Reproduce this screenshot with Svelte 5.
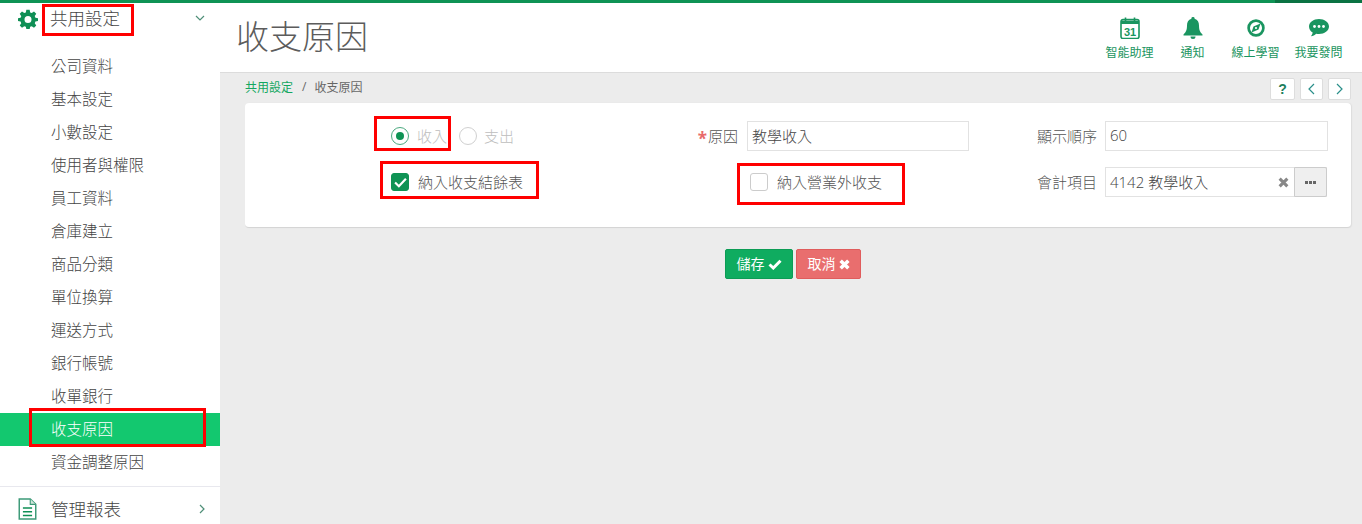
<script lang="ts">
  const menu = ["公司資料", "基本設定", "小數設定", "使用者與權限", "員工資料", "倉庫建立", "商品分類", "單位換算", "運送方式", "銀行帳號", "收單銀行", "收支原因", "資金調整原因"];
  const active = "收支原因";
</script>

<div class="page">
  <aside class="sidebar">
    <div class="group-head open">
      <svg class="group-icon" viewBox="0 0 24 24" width="20" height="20"><path fill="#0f8f55" d="M10 1h4l.6 3.100 1.900.8L19.200 3.100l2.700 2.700-1.800 2.700.8 1.900L24 11v3.500l-3.100.6-.8 1.900 1.800 2.700-2.700 2.700-2.700-1.800-1.900.8-.6 2.600h-4l-.6-2.600-1.900-.8-2.700 1.800-2.700-2.700 1.800-2.700-.8-1.900L0 14.500V11l3.100-.5.8-1.900L2.100 5.800 4.800 3.100l2.700 1.800 1.900-.8zM12 8.500a4.200 4.200 0 1 0 0 8.400 4.200 4.200 0 0 0 0-8.400z"/></svg>
      <span class="group-title">共用設定</span>
      <svg class="chev" viewBox="0 0 10 6" width="10" height="6"><path d="M1 1l4 4 4-4" fill="none" stroke="#4f8f78" stroke-width="1.200"/></svg>
    </div>
    <ul class="menu">
      {#each menu as item}
        <li class:active={item === active}>{item}</li>
      {/each}
    </ul>
    <div class="group-head last">
      <svg class="group-icon" viewBox="0 0 20 24" width="19" height="22"><path d="M1 1h12l6 6v16H1z" fill="#fff" stroke="#3d9a78" stroke-width="1.600"/><path d="M13 1v6h6" fill="#cfe5da" stroke="#3d9a78" stroke-width="1.200"/><path d="M5 11h10M5 15h10M5 19h10" stroke="#0f8f55" stroke-width="1.600"/></svg>
      <span class="group-title">管理報表</span>
      <svg class="chev" viewBox="0 0 6 10" width="6" height="10"><path d="M1 1l4 4-4 4" fill="none" stroke="#4f8f78" stroke-width="1.200"/></svg>
    </div>
  </aside>

  <main class="main">
    <header class="header">
      <h1>收支原因</h1>
      <nav class="tools">
        <div class="tool">
          <svg viewBox="0 0 20 22" width="20" height="22"><path d="M1 4.500a2 2 0 0 1 2-2h14a2 2 0 0 1 2 2v15a2 2 0 0 1-2 2H3a2 2 0 0 1-2-2z" fill="#fff" stroke="#1a9560" stroke-width="1.600"/><path d="M1 3.500h18v3.500H1z" fill="#1a9560"/><path d="M5.500 .5v4M14.500 .5v4" stroke="#1a9560" stroke-width="1.600"/><text x="10" y="18.500" text-anchor="middle" class="cal">31</text></svg>
          <span>智能助理</span>
        </div>
        <div class="tool">
          <svg viewBox="0 0 20 22" width="20" height="22"><path d="M10 0a1.600 1.600 0 0 1 1.600 1.800C14.800 2.600 16 5.300 16 8.500c0 4.500 1 6.500 3.500 9v1h-19v-1C3 15 4 13 4 8.500c0-3.200 1.200-5.900 4.400-6.700A1.600 1.600 0 0 1 10 0zM7.500 19.500h5a2.500 2.500 0 0 1-5 0z" fill="#1a9560"/></svg>
          <span>通知</span>
        </div>
        <div class="tool">
          <svg viewBox="0 0 20 20" width="18" height="18"><circle cx="10" cy="10" r="8.200" fill="none" stroke="#1a9560" stroke-width="3"/><path d="M15 5l-2.200 6.800L5 15l2.200-6.800zM10 8.800a1.200 1.200 0 1 0 0 2.400 1.200 1.200 0 0 0 0-2.400z" fill="#1a9560" fill-rule="evenodd"/></svg>
          <span>線上學習</span>
        </div>
        <div class="tool">
          <svg viewBox="0 0 20 18" width="20" height="18"><path d="M10 0c5.500 0 10 3.300 10 7.500S15.500 15 10 15c-1 0-2-.1-2.900-.3C5.800 16 4 17 1.800 17.300c1-1 1.700-2.200 1.900-3.700C1.400 12.200 0 10 0 7.500 0 3.300 4.500 0 10 0z" fill="#1a9560"/><circle cx="5.500" cy="7.500" r="1.400" fill="#fff"/><circle cx="10" cy="7.500" r="1.400" fill="#fff"/><circle cx="14.500" cy="7.500" r="1.400" fill="#fff"/></svg>
          <span>我要發問</span>
        </div>
      </nav>
    </header>

    <div class="content">
      <div class="crumbs">
        <span class="link">共用設定</span>
        <span class="sep">/</span>
        <span>收支原因</span>
        <div class="pager">
          <button class="help">?</button>
          <button aria-label="上一筆"><svg viewBox="0 0 7 12" width="7" height="12"><path d="M6 1L1 6l5 5" fill="none" stroke="#2a8f8a" stroke-width="1.200"/></svg></button>
          <button aria-label="下一筆"><svg viewBox="0 0 7 12" width="7" height="12"><path d="M1 1l5 5-5 5" fill="none" stroke="#2a8f8a" stroke-width="1.200"/></svg></button>
        </div>
      </div>

      <section class="card">
        <div class="radios">
          <span class="radio on"></span><span class="muted first">收入</span>
          <span class="radio"></span><span class="muted">支出</span>
        </div>
        <label class="field-label first-col" for="reason"><i>*</i>原因</label>
        <input id="reason" class="input" value="教學收入" />
        <label class="field-label" for="sort">顯示順序</label>
        <input id="sort" class="input" value="60" />

        <div class="check-cell">
          <span class="check on">
            <svg viewBox="0 0 12 10" width="13" height="11"><path d="M1 5l3.500 3.500L11 1.500" fill="none" stroke="#fff" stroke-width="2"/></svg>
          </span>
          <span class="check-text">納入收支結餘表</span>
        </div>
        <div class="check-cell second">
          <span class="check"></span>
          <span class="check-text">納入營業外收支</span>
        </div>
        <span class="field-label">會計項目</span>
        <div class="lookup">
          <span class="lookup-value">4142 教學收入</span>
          <svg class="clear" viewBox="0 0 10 10" width="11" height="11"><path d="M1.500 1.500l7 7M8.500 1.500l-7 7" stroke="#888" stroke-width="2.800"/></svg>
          <button class="more" aria-label="選擇"><span></span><span></span><span></span></button>
        </div>
      </section>

      <div class="actions">
        <button class="btn save">儲存
          <svg viewBox="0 0 14 11" width="14" height="11"><path d="M1.500 5.500l3.800 3.500L12.500 1.800" fill="none" stroke="#fff" stroke-width="3"/></svg>
        </button>
        <button class="btn cancel">取消
          <svg viewBox="0 0 10 10" width="11" height="11"><path d="M1.500 1.500l7 7M8.500 1.500l-7 7" stroke="#fff" stroke-width="3.200"/></svg>
        </button>
      </div>
    </div>
  </main>

  <!-- red annotation boxes from the screenshot -->
  <div class="mark" style="left:42px;top:4px;width:92px;height:32px"></div>
  <div class="mark" style="left:29px;top:408px;width:177px;height:39px"></div>
  <div class="mark" style="left:374px;top:116px;width:77px;height:35px"></div>
  <div class="mark" style="left:380px;top:161px;width:159px;height:38px"></div>
  <div class="mark" style="left:737px;top:163px;width:168px;height:42px"></div>
</div>

<style>
  :global(body) {
    margin: 0;
    overflow: hidden;
    font-family: "Open Sans", "Noto Sans CJK TC", sans-serif;
    font-weight: 300;
    color: #555;
  }

  .page {
    position: relative;
    display: flex;
    width: 1362px;
    height: 524px;
    overflow: hidden;
    border-style: solid;
    border-width: 3px 0 0;
    border-image: linear-gradient(90deg, #0f9355 1274px, #0a7343 1274px) 1;
    box-sizing: border-box;
    background: #ececec;
  }

  .sidebar {
    flex: 0 0 220px;
    background: #fff;
    display: flex;
    flex-direction: column;
  }

  .group-head {
    display: flex;
    align-items: center;
    height: 29px;
    padding: 0 15px 0 18px;
    flex: none;
  }

  .group-head.last {
    margin-top: 7px;
    height: 44px;
    border-top: 1px solid #e8e8ee;
    box-sizing: border-box;
  }

  .open .group-icon {
    margin-top: 2px;
    margin-right: 12px;
  }

  .group-icon {
    flex: none;
    margin-right: 14px;
  }

  .group-title {
    flex: 1;
    font-size: 17.500px;
    color: #444;
  }

  .chev {
    flex: none;
  }

  .menu {
    list-style: none;
    margin: 18px 0 0;
    padding: 0;
    flex: none;
  }

  .menu li {
    height: 33px;
    line-height: 33px;
    padding-left: 51px;
    font-size: 15.500px;
    color: #444;
  }

  .menu li.active {
    background: #13c86f;
    color: #fff;
  }

  .main {
    flex: 1;
    min-width: 0;
    display: flex;
    flex-direction: column;
  }

  .header {
    height: 70px;
    flex: none;
    background: #fff;
    border-bottom: 1px solid #dcdcdc;
    box-sizing: border-box;
    display: flex;
    justify-content: space-between;
    padding-left: 16px;
  }

  h1 {
    margin: 13px 0 0;
    font-size: 33px;
    line-height: 42px;
    font-weight: 300;
    color: #5c5c5c;
  }

  .tools {
    display: flex;
    padding: 14px 12px 0 0;
  }

  .tool {
    width: 63px;
    display: flex;
    flex-direction: column;
    align-items: center;
    font-size: 12px;
    font-weight: 400;
    color: #1a9560;
  }

  .tool svg {
    height: 22px;
    flex: none;
  }

  .tool span {
    margin-top: 6px;
    line-height: 16px;
  }

  .cal {
    font: 700 11px "Liberation Sans", sans-serif;
    fill: #1a9560;
  }

  .content {
    flex: 1;
    padding: 0 11px 0 25px;
  }

  .crumbs {
    display: flex;
    align-items: center;
    height: 30px;
    box-sizing: border-box;
    padding-bottom: 3px;
    font-size: 12px;
    font-weight: 400;
    color: #666;
  }

  .link {
    color: #13a760;
  }

  .sep {
    margin: 0 8px 0 9px;
  }

  .pager {
    margin-left: auto;
    display: flex;
    gap: 5px;
    margin-top: 4px;
  }

  .pager button {
    width: 23px;
    height: 22px;
    padding: 0;
    background: #fff;
    border: 1px solid #ddd;
    border-radius: 2px;
    display: flex;
    align-items: center;
    justify-content: center;
    font: 700 14px "Liberation Sans", sans-serif;
    color: #1d7f5c;
  }

  .pager .help {
    width: 25px;
  }

  .card {
    background: #fff;
    border-radius: 4px;
    border-bottom: 1px solid #d5d5d5;
    box-shadow: 1px 0 1px #ddd;
    padding: 18px 0 30px;
    display: grid;
    grid-template-columns: 364px 138px 222px 136px 223px;
    grid-auto-rows: 30px;
    row-gap: 16px;
    align-items: center;
    font-size: 15px;
    color: #555;
  }

  .radios {
    display: flex;
    align-items: center;
    padding-left: 146px;
  }

  .radio {
    width: 18px;
    height: 18px;
    box-sizing: border-box;
    border-radius: 50%;
    border: 1px solid #d0d0d0;
    flex: none;
    position: relative;
  }

  .radio.on {
    border-color: #4ba97f;
  }

  .radio.on::after {
    content: "";
    position: absolute;
    inset: 4px;
    border-radius: 50%;
    background: #0f9355;
  }

  .muted {
    margin-left: 7px;
    padding-bottom: 2px;
    color: #bdbdbd;
  }

  .muted.first {
    margin-left: 8px;
    margin-right: 12px;
  }

  .field-label {
    text-align: right;
    padding: 0 8px 2px 0;
    color: #555;
  }

  .field-label.first-col {
    padding-right: 9px;
  }

  .field-label i {
    color: #e86a6a;
    font-style: normal;
    font-weight: 700;
    font-size: 17px;
    line-height: 0;
    vertical-align: -3px;
    margin-right: 1px;
  }

  .input {
    width: 100%;
    height: 30px;
    box-sizing: border-box;
    border: 1px solid #e2e2e2;
    padding: 0 4px 2px;
    font: inherit;
    color: #444;
    outline: none;
  }

  .check-cell {
    display: flex;
    align-items: center;
    gap: 9px;
    padding-left: 146px;
  }

  .check-text {
    padding-bottom: 2px;
  }

  .check-cell.second {
    grid-column: 2 / span 2;
    padding-left: 141px;
  }

  .check {
    width: 18px;
    height: 18px;
    box-sizing: border-box;
    border: 1px solid #ccc;
    border-radius: 3px;
    display: flex;
    align-items: center;
    justify-content: center;
  }

  .check.on {
    background: #0f9355;
    border-color: #0f9355;
  }

  .lookup {
    display: flex;
    align-items: center;
    height: 30px;
    box-sizing: border-box;
    border: 1px solid #e2e2e2;
    padding-left: 4px;
    width: 222px;
  }

  .lookup-value {
    flex: 1;
    padding-bottom: 2px;
    color: #444;
  }

  .clear {
    margin-right: 5px;
  }

  .more {
    width: 33px;
    height: 30px;
    margin: 0 -1px 0 0;
    padding: 0;
    background: #efefef;
    border: 1px solid #ccc;
    border-radius: 0 2px 2px 0;
    display: flex;
    align-items: center;
    justify-content: center;
    gap: 1px;
  }

  .more span {
    width: 3px;
    height: 3px;
    background: #666;
  }

  .actions {
    display: flex;
    justify-content: center;
    gap: 3px;
    margin-top: 21px;
    padding-right: 10px;
  }

  .btn {
    height: 30px;
    padding: 0 0 2px;
    border-radius: 2px;
    display: flex;
    align-items: center;
    justify-content: center;
    gap: 3px;
    color: #fff;
    font: 14px "Open Sans", "Noto Sans CJK TC", sans-serif;
  }

  .btn svg {
    margin-top: 2px;
  }

  .save {
    width: 68px;
    background: #0fac60;
    border: 1px solid #0c9c55;
  }

  .cancel {
    width: 65px;
    background: #e96e6e;
    border: 1px solid #e05c5c;
  }

  .mark {
    position: absolute;
    margin-top: -3px;
    border: 3px solid #f00;
    box-sizing: border-box;
    pointer-events: none;
  }
</style>
